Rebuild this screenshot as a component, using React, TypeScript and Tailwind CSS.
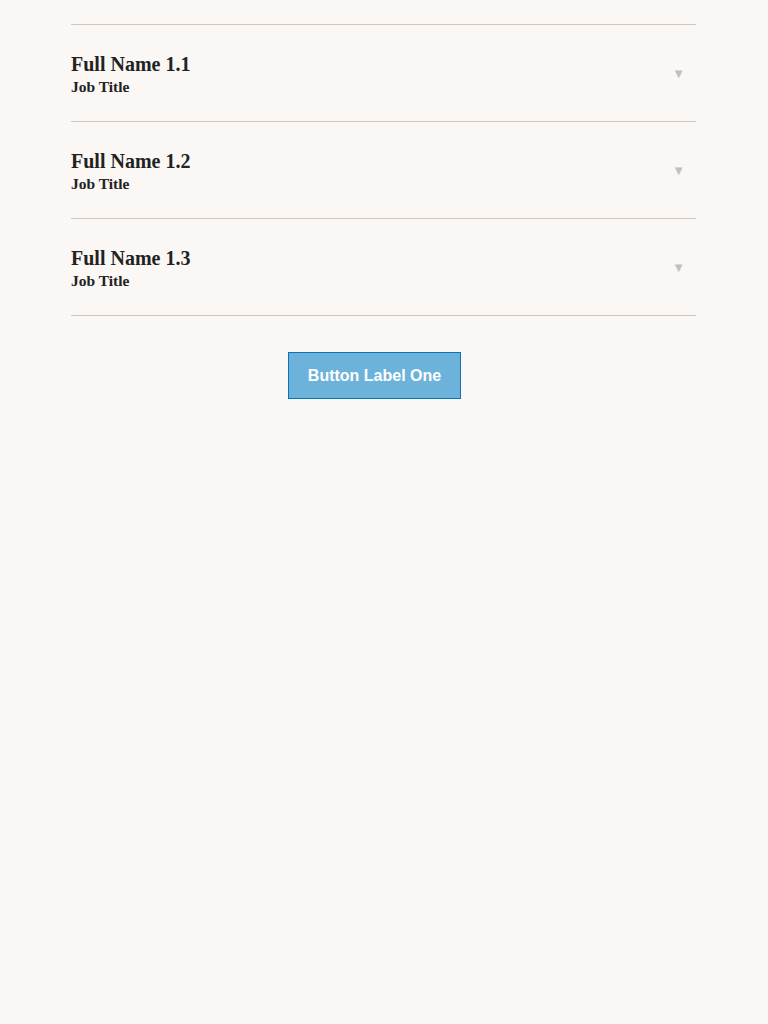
const people = [
  { name: "Full Name 1.1", title: "Job Title" },
  { name: "Full Name 1.2", title: "Job Title" },
  { name: "Full Name 1.3", title: "Job Title" },
];

const Row = ({ name, title }: { name: string; title: string }) => {
  return (
    <div className="flex h-[97px] items-center justify-between border-t border-[#cdc8c4] pr-[11px]">
      <div className="pt-[2px] text-[#222] [font-family:'Liberation_Serif',serif]">
        <div className="text-[20px] font-bold leading-[24px]">{name}</div>
        <div className="mt-[1px] text-[15.5px] font-bold leading-[20px]">{title}</div>
      </div>
      <span className="text-[13px] leading-none text-[#c2c0bd]">▼</span>
    </div>
  );
};

export default function App() {
  return (
    <div className="min-h-[1024px] bg-[#faf7f4] px-[71px] pt-[24px] [font-family:'Liberation_Sans',sans-serif]">
      <div className="w-[625px] border-b border-[#cdc8c4]">
        {people.map((p) => (
          <Row key={p.name} name={p.name} title={p.title} />
        ))}
      </div>
      <div className="mt-[36px] pl-[217px]">
        <button className="h-[47px] w-[173px] border border-[#0a74b0] bg-[#6db2da] text-[16px] font-bold text-white">
          Button Label One
        </button>
      </div>
    </div>
  );
}
